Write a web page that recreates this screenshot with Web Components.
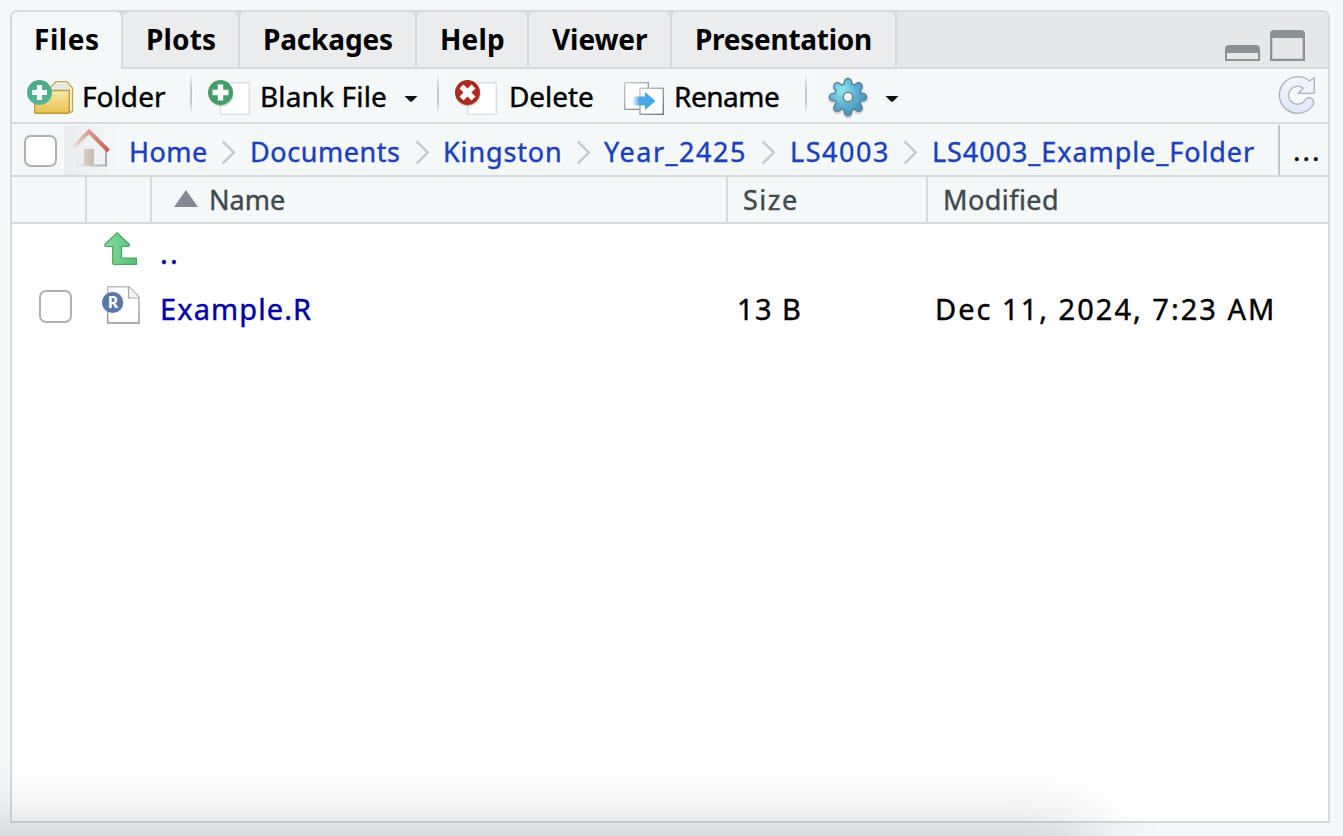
<!DOCTYPE html>
<html lang="en"><head><meta charset="utf-8"><title>Files</title>
<style>
html,body{margin:0;height:100%;overflow:hidden;background:#f5f7f9}
body{font-family:"Noto Sans","Open Sans",sans-serif;color:#000}
</style></head><body>
<files-pane></files-pane>
<script>
const pen = document.createElement('canvas').getContext('2d');

/* A single-line label: w = drawn width, gap = space before it, base = baseline below the row's top. */
customElements.define('ui-label', class extends HTMLElement {
  connectedCallback() {
    const root = this.attachShadow({mode: 'open'});
    const num = (k, d) => +(this.getAttribute(k) ?? d);
    const size = num('size', 28), w = num('w', 50), text = this.textContent;
    const weight = num('weight', 400);
    pen.font = `${weight} ${size}px "Noto Sans"`;
    const m = pen.measureText(text);
    const ink = m.actualBoundingBoxRight + m.actualBoundingBoxLeft;
    const ls = (w - ink) / Math.max(1, text.length - 1);
    root.innerHTML = `<style>
      :host{display:block;flex:none;width:${w}px;margin-left:${num('gap', 0)}px;white-space:pre;
        font-size:${size}px;font-weight:${weight};line-height:${2 * (num('base', 38) - .388 * size)}px;color:${this.getAttribute('color') || 'inherit'};
        -webkit-text-stroke:${weight > 400 ? 0 : .4}px currentColor}
      span{display:block;margin-left:${m.actualBoundingBoxLeft}px;letter-spacing:${ls}px}
    </style><span><slot></slot></span>`;
  }
});

customElements.define('ui-tab', class extends HTMLElement {
  connectedCallback() {
    this.attachShadow({mode: 'open'}).innerHTML = `<style>
      :host{display:flex;flex:none;box-sizing:border-box;width:${this.getAttribute('width')}px;height:57px;align-items:flex-start;background:#d6dadc}
      div{display:flex;align-items:flex-start;flex:1;height:55px;margin-right:2px;background:#ebecee;border-radius:5px 5px 0 0}
      :host([active]) div{background:#f4f8f9;height:57px}
    </style><div><slot></slot></div>`;
  }
});

customElements.define('ui-check', class extends HTMLElement {
  connectedCallback() {
    this.attachShadow({mode: 'open'}).innerHTML = `<style>
      :host{display:block;flex:none;box-sizing:border-box;width:33px;height:32px;border:2px solid #b0b0b0;border-radius:7px;background:#fff}
      :host([tall]){height:33px}
    </style>`;
  }
});

const ART = {
  folder: ['26 69 48 53', `<defs><linearGradient id="f" x1="0" y1="0" x2="0" y2="1"><stop stop-color="#f6ecaa"/><stop offset="1" stop-color="#e9c04f"/></linearGradient><linearGradient id="p" x1="0" y1="0" x2="0" y2="1"><stop stop-color="#4aa886"/><stop offset="1" stop-color="#55b592"/></linearGradient></defs>
    <path d="M50 88L56 81.700H67L72.500 88V111Q72.500 112 71.500 112H60V94H50Z" fill="#f7f1d4" stroke="#c4a54b" stroke-width="1.300"/><path d="M53 87.500L57 83.500H66L70 88V90H53Z" fill="#e4e7e8"/>
    <path d="M34.700 90.500H69.300V112.300Q69.300 113.300 68.300 113.300H35.700Q34.700 113.300 34.700 112.300Z" fill="url(#f)" stroke="#c19a3a" stroke-width="1.400"/><circle cx="39.500" cy="92.500" r="12.500" fill="url(#p)"/><path d="M39.500 85V100M32 92.500H47" stroke="#fff" stroke-width="5.200"/>`],
  blank: ['207 69 44 53', `<rect x="220.700" y="82.700" width="28.600" height="31.600" fill="#fff" stroke="#d9dfe6" stroke-width="1.400"/><circle cx="221" cy="94" r="12.500" fill="#4a6a60" opacity=".28"/><circle cx="220.500" cy="92.500" r="12.500" fill="#479d69"/><path d="M220.500 84.500V100.500M212.500 92.500H228.500" stroke="#fff" stroke-width="5.400"/>`],
  remove: ['454 69 44 53', `<rect x="467.700" y="82.700" width="28.600" height="31.600" fill="#fff" stroke="#d9dfe6" stroke-width="1.400"/><circle cx="468" cy="94" r="12.500" fill="#6a5050" opacity=".28"/><circle cx="467.500" cy="92.500" r="12.500" fill="#aa2c20"/><path d="M461.500 86.500L473.500 98.500M473.500 86.500L461.500 98.500" stroke="#fff" stroke-width="5.600"/>`],
  rename: ['623 69 42 53', `<defs><linearGradient id="b" x1="0" y1="0" x2="1" y2="1"><stop stop-color="#c6cbd0"/><stop offset="1" stop-color="#6d7580"/></linearGradient><linearGradient id="a" x1="0" x2="1"><stop stop-color="#4aa7e6" stop-opacity=".1"/><stop offset=".3" stop-color="#4aa7e6"/></linearGradient></defs><rect x="624.700" y="82.700" width="23.600" height="26.600" fill="#fff" stroke="url(#b)" stroke-width="1.300"/><rect x="640" y="88.300" width="23.300" height="26" fill="#fff" stroke="url(#b)" stroke-width="1.400"/><path d="M633 96.500H645V92L655.500 101L645 110V105.500H633Z" fill="url(#a)"/>`],
  gear: ['826 69 44 53', `<defs><radialGradient id="g" gradientUnits="userSpaceOnUse" cx="842" cy="91" r="25"><stop stop-color="#92eaf4"/><stop offset=".55" stop-color="#60b2d2"/><stop offset="1" stop-color="#4594bb"/></radialGradient><g id="t"><path d="M848 82V112M833 97H863M837.400 86.400L858.600 107.600M858.600 86.400L837.400 107.600" fill="none" stroke-linecap="round"/></g></defs>
    <g opacity=".16" transform="translate(0 1.500)"><use href="#t" stroke="#000" stroke-width="10"/></g><circle cx="848.200" cy="97" r="14.300" fill="#557f93"/><use href="#t" stroke="#557f93" stroke-width="8.600"/><circle cx="848" cy="97" r="13" fill="url(#g)"/><use href="#t" stroke="url(#g)" stroke-width="6"/><circle cx="848" cy="97" r="4.700" fill="#f7f9fa" stroke="#60808f" stroke-width="1.500"/>`],
  caret: ['0 69 14 53', `<path d="M.500 96H13.500L9 100.500Q7 103 5 100.500Z" fill="#111"/>`],
  refresh: ['1277 69 40 53', `<defs><linearGradient id="r" x1="0" y1="0" x2="0" y2="1"><stop stop-color="#f4f6fb"/><stop offset="1" stop-color="#dfe8f8"/></linearGradient></defs><path d="M1314.300 77.500V93.300H1298.300L1303.200 88.200A9 9 0 1 0 1305.500 99.500Q1308 96.500 1311.500 98.500Q1315 101 1313 105A18.300 18.300 0 1 1 1309.500 81Z" fill="url(#r)" stroke="#adb1bb" stroke-width="1.300" stroke-linejoin="round"/>`],
  home: ['64 125 54 50', `<defs><linearGradient id="h" x1="0" x2="1"><stop stop-color="#ebecee"/><stop offset="1" stop-color="#ebecee" stop-opacity="0"/></linearGradient><linearGradient id="q" gradientUnits="userSpaceOnUse" x1="72" y1="0" x2="110" y2="0"><stop stop-color="#cb6150" stop-opacity="0"/><stop offset=".5" stop-color="#d07b70" stop-opacity=".8"/><stop offset="1" stop-color="#c95b49"/></linearGradient><linearGradient id="k" x1="0" x2="1"><stop stop-color="#ebecee"/><stop offset="1" stop-color="#f2f4f7"/></linearGradient><linearGradient id="w" gradientUnits="userSpaceOnUse" x1="74" y1="0" x2="106" y2="0"><stop stop-color="#9fa6af" stop-opacity="0"/><stop offset="1" stop-color="#a9afb9"/></linearGradient><linearGradient id="d" x1="0" x2="1"><stop stop-color="#dacdbf"/><stop offset="1" stop-color="#c9bcaf"/></linearGradient></defs><path d="M64 125H118V175H64Z" fill="url(#h)"/><path d="M76 148L89 135L106 152V166H76Z" fill="url(#k)"/><path d="M76 165.500H106V149" fill="none" stroke="url(#w)" stroke-width="2"/><path d="M84 149H94V165H84Z" fill="url(#d)"/><path d="M73 147L89 131.500L108.500 151" fill="none" stroke="url(#q)" stroke-width="4"/>`],
  chevron: ['221 124 16 51', `<path d="M223.800 141.500L235.800 152.700L223.800 164" fill="none" stroke="#fff" stroke-width="2"/><path d="M222.700 141.500L234 152.500L222.700 163.500" fill="none" stroke="#c6cace" stroke-width="2.500"/>`],
  sort: ['174 177 24 45', `<path d="M186 190L198 207H174Z" fill="#838995"/>`],
  up: ['102 224 38 53', `<defs><linearGradient id="u" x1="0" x2="1"><stop stop-color="#83dc9f"/><stop offset="1" stop-color="#57bd76"/></linearGradient></defs><path d="M117 232.800L129.500 244.500Q129.500 246.500 128 246.500H121.500V258H136.500V264.300H114Q112.700 264.300 112.700 263V246.500H106Q104.700 246.500 104.700 244.500Z" fill="url(#u)" stroke="#4ba566" stroke-width="1.200"/>`],
  rfile: ['101 277 40 56', `<defs><linearGradient id="o" x1="0" y1="0" x2="0" y2="1"><stop stop-color="#b9bcc0"/><stop offset="1" stop-color="#8d9196"/></linearGradient></defs><path d="M107.700 286.700H129L139 297V323H107.700Z" fill="#fff" stroke="url(#o)" stroke-width="1.400"/><path d="M128.500 286.700V298H139" fill="#f4f4f4" stroke="#a5a8ac" stroke-width="1.200"/><circle cx="112.700" cy="302.500" r="10.600" fill="#5878aa"/><text x="112.900" y="308.200" text-anchor="middle" font-family="Noto Sans" font-size="16" font-weight="700" fill="#fff">R</text>`],
  min: ['1224 12 37 55', `<path d="M1225 61V49Q1225 45 1229 45H1256Q1260 45 1260 49V61ZM1227 53V59H1258V53Z" fill-rule="evenodd" fill="#8b9296"/>`],
  max: ['1269 12 37 55', `<path d="M1270 61V34Q1270 30 1274 30H1301Q1305 30 1305 34V61ZM1272.300 38V58.700H1302.700V38Z" fill-rule="evenodd" fill="#8b9296"/>`],
  rule: ['0 69 5 53', `<defs><linearGradient id="s" x1="0" y1="0" x2="0" y2="1"><stop stop-color="#c6cacc" stop-opacity="0"/><stop offset=".4" stop-color="#c6cacc"/><stop offset=".7" stop-color="#c6cacc"/><stop offset="1" stop-color="#c6cacc" stop-opacity="0"/></linearGradient></defs><rect y="73" width="2.200" height="41" fill="url(#s)"/><rect x="2.200" y="73" width="2" height="41" fill="#fff" opacity=".6"/>`]
};
customElements.define('ui-icon', class extends HTMLElement {
  connectedCallback() {
    const [box, art] = ART[this.getAttribute('name')];
    const [, , w, h] = box.split(' ');
    this.attachShadow({mode: 'open'}).innerHTML = `<style>:host{display:block;flex:none;width:${w}px;height:${h}px;margin-left:${this.getAttribute('gap') || 0}px}svg{display:block}</style><svg width="${w}" height="${h}" viewBox="${box}">${art}</svg>`;
  }
});

const crumb = (text, w, gap, before = 15) => `<ui-icon name="chevron" gap="${before}"></ui-icon><ui-label size="27" base="38" w="${w}" gap="${gap}">${text}</ui-label>`;

customElements.define('files-pane', class extends HTMLElement {
  connectedCallback() {
    this.attachShadow({mode: 'open'}).innerHTML = `<style>
      :host{display:block;position:relative;box-sizing:border-box;height:836px;padding:10px 13px 13px 10px;overflow:hidden}
      .panel{box-sizing:border-box;height:813px;border:2px solid #d6dadc;border-radius:7px 7px 0 0;background:#fff;overflow:hidden}
      .row{display:flex;align-items:flex-start;box-sizing:border-box;border-bottom:2px solid #d6dadc;background:#f4f8f9}
      .tabs{height:57px;background:#e6e7e9}
      .tabs ui-tab{margin-bottom:-2px}
      .end{margin-left:auto;display:flex}
      .tools{height:55px}.path{height:53px;color:#1b40bb}
      .path ui-check{margin:11px 0 0 12px}
      .more{display:flex;height:50px;margin:1px 0 0 auto;border-left:2px solid #c0c5ca;width:48px;color:#000}
      .head,.item{display:grid}
      .head{height:47px;color:#41494d}
      .cell{display:flex;height:45px;align-items:flex-start}
      .head .cell+.cell{border-left:2px solid #d6dadc}
      .head{grid-template-columns:73px 65px 576px 200px 1fr}
      .item{height:53px;grid-template-columns:90px 58px 577px 198px 1fr;align-items:start}
      .item ui-check{margin:13px 0 0 27px}
      .item>div{display:flex}
      .glow{position:absolute;left:-200px;top:836px;width:1294px;height:300px;border-radius:20px;box-shadow:0 0 76px rgba(0,0,0,.23)}
    </style>
    <div class="panel">
      <div class="row tabs">
        <ui-tab active width="111"><ui-label weight="700" w="62" gap="24">Files</ui-label></ui-tab>
        <ui-tab width="117"><ui-label weight="700" w="67" gap="25">Plots</ui-label></ui-tab>
        <ui-tab width="177"><ui-label weight="700" w="127" gap="25">Packages</ui-label></ui-tab>
        <ui-tab width="112"><ui-label weight="700" w="62" gap="25">Help</ui-label></ui-tab>
        <ui-tab width="143"><ui-label weight="700" w="96" gap="23">Viewer</ui-label></ui-tab>
        <ui-tab width="225"><ui-label weight="700" w="174" gap="25">Presentation</ui-label></ui-tab>
        <div class="end" style="margin-right:22px"><ui-icon name="min"></ui-icon><ui-icon name="max" gap="8"></ui-icon></div>
      </div>
      <div class="row tools">
        <ui-icon name="folder" gap="14"></ui-icon><ui-label base="38" w="82" gap="10">Folder</ui-label>
        <ui-icon name="rule" gap="24"></ui-icon>
        <ui-icon name="blank" gap="12"></ui-icon><ui-label base="38" w="124" gap="11">Blank File</ui-label>
        <ui-icon name="caret" gap="18"></ui-icon><ui-icon name="rule" gap="19"></ui-icon>
        <ui-icon name="remove" gap="12"></ui-icon><ui-label base="38" w="82" gap="13">Delete</ui-label>
        <ui-icon name="rename" gap="30"></ui-icon><ui-label base="38" w="103" gap="11">Rename</ui-label>
        <ui-icon name="rule" gap="26"></ui-icon><ui-icon name="gear" gap="16"></ui-icon><ui-icon name="caret" gap="15"></ui-icon>
        <div class="end" style="margin-right:11px"><ui-icon name="refresh"></ui-icon></div>
      </div>
      <div class="row path">
        <ui-check></ui-check><ui-icon name="home" gap="7" style="padding-top:1px"></ui-icon>
        <ui-label size="27" base="38" w="75" gap="13">Home</ui-label>
        ${crumb('Documents', 147, 15)}${crumb('Kingston', 115, 14, 16)}${crumb('Year_2425', 140, 12, 16)}${crumb('LS4003', 95, 15, 17)}${crumb('LS4003_Example_Folder', 320, 15, 16)}
        <div class="more"><ui-label base="36" w="23" gap="15">...</ui-label></div>
      </div>
      <div class="row head">
        <div class="cell"></div><div class="cell"></div>
        <div class="cell"><ui-icon name="sort" gap="22"></ui-icon><ui-label size="27" base="33" w="73" gap="13">Name</ui-label></div>
        <div class="cell"><ui-label size="27" base="33" w="52" gap="16">Size</ui-label></div>
        <div class="cell"><ui-label size="27" base="33" w="112" gap="17">Modified</ui-label></div>
      </div>
      <div class="item"><div></div><div><ui-icon name="up"></ui-icon></div><div><ui-label size="29" base="40" w="14" gap="2" color="#0000a5">..</ui-label></div></div>
      <div class="item"><div><ui-check tall></ui-check></div><div><ui-icon name="rfile" gap="-1"></ui-icon></div>
        <div><ui-label size="29" base="43" w="149" gap="2" color="#0000a5">Example.R</ui-label></div>
        <div><ui-label size="29" base="43" w="61" gap="2">13 B</ui-label></div>
        <div><ui-label size="29" base="43" w="335" gap="2">Dec 11, 2024, 7:23 AM</ui-label></div></div>
    </div><div class="glow"></div>`;
  }
});
</script></body></html>
